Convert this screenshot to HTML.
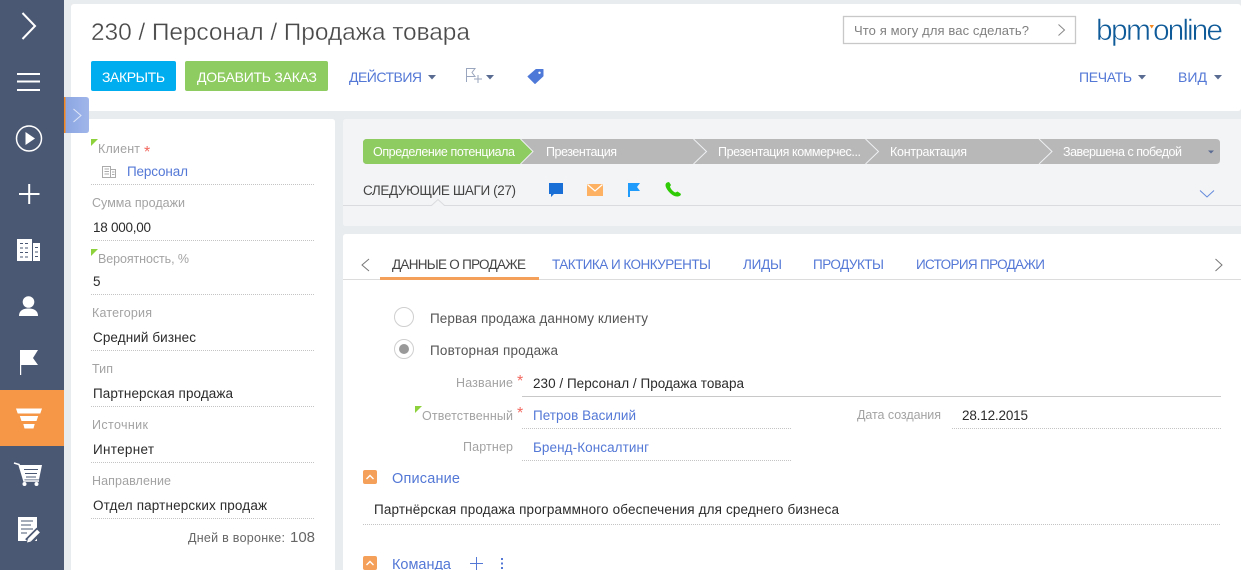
<!DOCTYPE html>
<html lang="ru">
<head>
<meta charset="utf-8">
<title>230 / Персонал / Продажа товара</title>
<style>
html,body{margin:0;padding:0;width:1241px;height:570px;overflow:hidden;background:#e9ecee}
svg{display:block}
text{font-family:"Liberation Sans",sans-serif;white-space:pre}
.l{font-size:12.5px;fill:#a3a3a3}
.v{font-size:13.5px;fill:#2b2b2b}
.b{font-size:13.5px;fill:#5478d6}
.t{font-size:14px;fill:#5478d6}
.s{font-size:12.5px;fill:#fff}
.d{stroke:#c4c4c4;stroke-width:1;stroke-dasharray:1 1;fill:none}
.st{font-size:16px;fill:#f2685f}
</style>
</head>
<body>
<svg width="1241" height="570" viewBox="0 0 1241 570" xmlns="http://www.w3.org/2000/svg">
<defs>
<linearGradient id="tg" x1="0" x2="1" y1="0" y2="0"><stop offset="0" stop-color="#8aa5e2"/><stop offset="1" stop-color="#a0b6ea"/></linearGradient>
</defs>
<rect width="1241" height="570" fill="#e9ecee"/>

<!-- sidebar -->
<rect width="64" height="570" fill="#4b5873"/>
<rect y="390" width="64" height="56" fill="#f59746"/>
<path d="M22.500 13 L35 26 L22.500 39" fill="none" stroke="#fff" stroke-width="2"/>
<path d="M17 74H40M17 81.500H40M17 90H40" stroke="#fff" stroke-width="2"/>
<circle cx="29" cy="138.500" r="12.500" fill="none" stroke="#fff" stroke-width="1.500"/>
<path d="M25.500 132 L35 138.500 L25.500 145Z" fill="#fff"/>
<path d="M19 194H39.500M29.200 184V204" stroke="#fff" stroke-width="2"/>
<path d="M17 239H32V261H17ZM33 243H40V261H33Z" fill="#fff"/>
<path d="M20 243.500h3M25 243.500h3M20 248h3M25 248h3M20 252.500h3M25 252.500h3M20 257h3M25 257h3M35 247.500h3M35 252h3M35 256.500h3" stroke="#4b5873" stroke-width="1"/>
<circle cx="28.500" cy="302" r="5.800" fill="#fff"/>
<path d="M19 316C19 310 24 308.500 28.500 308.500C33 308.500 38 310 38 316Z" fill="#fff"/>
<path d="M20 350H38L33 358L38 365H21.200V375H20Z" fill="#fff"/>
<path d="M16 408.500H42L40.300 413.500H17.700ZM19.800 416H38.200L36.500 421H21.500ZM23.300 424H34.700L33.500 428.500H24.500Z" fill="#fff"/>
<path d="M14 463 L19 464.500 L24 481H39" fill="none" stroke="#fff" stroke-width="1.500"/>
<path d="M19.500 465H42L39 479.500H23.500Z" fill="#fff"/>
<path d="M24 469.500H38M25 473.500H37M26 477H36" stroke="#4b5873" stroke-width="1"/>
<circle cx="24.500" cy="484" r="2" fill="#fff"/><circle cx="36.500" cy="484" r="2" fill="#fff"/>
<path d="M18 517H37V541H18Z" fill="#fff"/>
<path d="M21 521H33M21 525H31M21 529H33M21 533H27" stroke="#4b5873" stroke-width="1"/>
<path d="M28 542 L39.500 530.500" stroke="#4b5873" stroke-width="8"/>
<path d="M29.500 540 L38.500 531" stroke="#fff" stroke-width="4"/>
<path d="M27 542.500 L28 538.500 L31 541.500Z" fill="#fff"/>

<!-- header -->
<rect x="71" y="4" width="1170" height="107" rx="3" fill="#fff"/>
<text x="91" y="40" font-size="24.500" fill="#4a4a4a" stroke="#fff" stroke-width="0.35" textLength="379" lengthAdjust="spacing">230 / Персонал / Продажа товара</text>
<rect x="91" y="61" width="85" height="30" rx="2" fill="#00aeef"/>
<text x="102" y="82" font-size="14" fill="#fff" textLength="63" lengthAdjust="spacing">ЗАКРЫТЬ</text>
<rect x="185" y="61" width="143" height="30" rx="2" fill="#8ecb60"/>
<text x="197" y="82" font-size="14" fill="#fff" textLength="120" lengthAdjust="spacing">ДОБАВИТЬ ЗАКАЗ</text>
<text x="349" y="82" class="t" textLength="73" lengthAdjust="spacing">ДЕЙСТВИЯ</text>
<path d="M428 75H436L432 79.500Z" fill="#5a6b92"/>
<path d="M466.500 82V68.500H475L472 72.500L475 76.500H466.500" fill="none" stroke="#9aa6bd" stroke-width="1"/>
<path d="M474 79H482M478 75V83" stroke="#9aa6bd" stroke-width="1"/>
<path d="M486 75H494L490 79.500Z" fill="#5a6b92"/>
<path d="M528 76.500 L536 69.500 L543 69.500 L543 76 L535 83.500Z" fill="#4f79d8" stroke="#4f79d8" stroke-linejoin="round"/>
<circle cx="539.500" cy="72.800" r="1.200" fill="#fff"/>
<text x="1079" y="82" class="t" textLength="53" lengthAdjust="spacing">ПЕЧАТЬ</text>
<path d="M1138 75H1146L1142 79.500Z" fill="#5a6b92"/>
<text x="1178" y="82" class="t" textLength="29" lengthAdjust="spacing">ВИД</text>
<path d="M1214 75H1222L1218 79.500Z" fill="#5a6b92"/>

<!-- search -->
<rect x="843.500" y="16.500" width="232" height="27" fill="#fff" stroke="#c8c8c8" stroke-width="1.300"/>
<text x="854" y="35" font-size="13" fill="#808080" textLength="175" lengthAdjust="spacing">Что я могу для вас сделать?</text>
<path d="M1058.500 24.500 L1064.500 30 L1058.500 35.500" fill="none" stroke="#888" stroke-width="1"/>

<!-- logo -->
<text x="1096" y="40" font-size="30" fill="#0f5a98" stroke="#fff" stroke-width="0.6" textLength="55" lengthAdjust="spacing">bpm</text>
<text x="1153" y="40" font-size="30" fill="#0f5a98" stroke="#fff" stroke-width="0.6" textLength="70" lengthAdjust="spacing">online</text>
<path d="M1149.500 25H1154L1151.700 28.500Z" fill="#f5881f"/>

<!-- left panel -->
<path d="M71 122Q71 119 74 119H332Q335 119 335 122V570H71Z" fill="#fff"/>
<path d="M91 139H98L91 146Z" fill="#8dd13c"/>
<text x="98" y="153" class="l" textLength="42" lengthAdjust="spacing">Клиент</text>
<text x="144" y="157" class="st">*</text>
<path d="M102.500 166.500H110.500V177.500H102.500ZM110.500 169.500H115.500V177.500H110.500ZM104.500 169H109M104.500 171.500H109M104.500 174H109M112 172H114.500M112 174.500H114.500" fill="none" stroke="#ababab" stroke-width="1"/>
<text x="127" y="176" class="b" textLength="61" lengthAdjust="spacing">Персонал</text>
<path class="d" d="M91 184.500H315"/>
<text x="92" y="207" class="l" textLength="93" lengthAdjust="spacing">Сумма продажи</text>
<text x="93" y="232" class="v" textLength="58" lengthAdjust="spacing">18 000,00</text>
<path class="d" d="M91 240.500H315"/>
<path d="M91 249H98L91 256Z" fill="#8dd13c"/>
<text x="98" y="263" class="l" textLength="91" lengthAdjust="spacing">Вероятность, %</text>
<text x="93" y="286" class="v">5</text>
<path class="d" d="M91 294.500H315"/>
<text x="92" y="317" class="l" textLength="60" lengthAdjust="spacing">Категория</text>
<text x="93" y="342" class="v" textLength="103" lengthAdjust="spacing">Средний бизнес</text>
<path class="d" d="M91 350.500H315"/>
<text x="92" y="373" class="l" textLength="21" lengthAdjust="spacing">Тип</text>
<text x="93" y="398" class="v" textLength="140" lengthAdjust="spacing">Партнерская продажа</text>
<path class="d" d="M91 406.500H315"/>
<text x="92" y="429" class="l" textLength="56" lengthAdjust="spacing">Источник</text>
<text x="93" y="454" class="v" textLength="61" lengthAdjust="spacing">Интернет</text>
<path class="d" d="M91 462.500H315"/>
<text x="92" y="485" class="l" textLength="79" lengthAdjust="spacing">Направление</text>
<text x="93" y="510" class="v" textLength="174" lengthAdjust="spacing">Отдел партнерских продаж</text>
<path class="d" d="M91 518.500H315"/>
<text x="188" y="542" font-size="12.500" fill="#666" textLength="97" lengthAdjust="spacing">Дней в воронке:</text>
<text x="290" y="542" font-size="15" fill="#666" textLength="25" lengthAdjust="spacing">108</text>

<!-- side toggle -->
<path d="M64 97H86Q89 97 89 100V130Q89 133 86 133H64Z" fill="url(#tg)"/>
<rect x="64" y="97" width="1.500" height="36" fill="#f5881f"/>
<path d="M73.500 109 L81 115.500 L73.500 122" fill="none" stroke="#dfe6f7" stroke-width="1"/>

<!-- stage panel -->
<path d="M343 122Q343 119 346 119H1241V226H346Q343 226 343 223Z" fill="#f3f4f6"/>
<path d="M367 139H1216Q1220 139 1220 143V160Q1220 164 1216 164H367Q363 164 363 160V143Q363 139 367 139Z" fill="#b8b8b8"/>
<path d="M367 139H520L533 151.500L520 164H367Q363 164 363 160V143Q363 139 367 139Z" fill="#8ecb60"/>
<path d="M520.500 139L533 151.500L520.500 164M693.500 139L706.500 151.500L693.500 164M865.500 139L878.500 151.500L865.500 164M1039 139L1052 151.500L1039 164" fill="none" stroke="#eef0f2" stroke-width="1"/>
<text x="373" y="156" class="s" textLength="142" lengthAdjust="spacing">Определение потенциала</text>
<text x="546" y="156" class="s" textLength="71" lengthAdjust="spacing">Презентация</text>
<text x="718" y="156" class="s" textLength="143" lengthAdjust="spacing">Презентация коммерчес...</text>
<text x="890" y="156" class="s" textLength="77" lengthAdjust="spacing">Контрактация</text>
<text x="1063" y="156" class="s" textLength="119" lengthAdjust="spacing">Завершена с победой</text>
<path d="M1208 150.500H1214L1211 153.500Z" fill="#5a6b92"/>
<text x="363" y="195" font-size="13.500" fill="#444" textLength="153" lengthAdjust="spacing">СЛЕДУЮЩИЕ ШАГИ (27)</text>
<path d="M343 205.500H431.500L438 199.500L444.500 205.500H1241" fill="none" stroke="#d9dbde" stroke-width="1"/>
<path d="M549 183H563V194H554L551 197V194H549Z" fill="#1a6fd6"/>
<rect x="587" y="184" width="16" height="12" fill="#fdb163"/>
<path d="M587.500 184.500L595 191L602.500 184.500" fill="none" stroke="#fff" stroke-width="1.200"/>
<path d="M628 183H640L637 187L640 191H630V197H628Z" fill="#1e9bfb"/>
<path d="M667 182.500C664.500 184 665.500 187 667.500 190C670 193.500 674 197 678 196.500C680.500 196 681.500 194.500 680.500 193.500L677.500 191.500L675.500 192.500C673.500 192 670.500 189 670 186.500L671 185L669 182Z" fill="#2ecb06"/>
<path d="M1200 190.500L1207 197L1214 190.500" fill="none" stroke="#6189dc" stroke-width="1"/>

<!-- main panel -->
<path d="M343 237Q343 234 346 234H1241V570H343Z" fill="#fff"/>
<path d="M369 259L362 265L369 271" fill="none" stroke="#777" stroke-width="1"/>
<text x="392" y="269" font-size="13.500" fill="#444" textLength="134" lengthAdjust="spacing">ДАННЫЕ О ПРОДАЖЕ</text>
<text x="552" y="269" class="b" textLength="159" lengthAdjust="spacing">ТАКТИКА И КОНКУРЕНТЫ</text>
<text x="743" y="269" class="b" textLength="39" lengthAdjust="spacing">ЛИДЫ</text>
<text x="813" y="269" class="b" textLength="71" lengthAdjust="spacing">ПРОДУКТЫ</text>
<text x="916" y="269" class="b" textLength="129" lengthAdjust="spacing">ИСТОРИЯ ПРОДАЖИ</text>
<path d="M1215.500 259L1222 265L1215.500 271" fill="none" stroke="#777" stroke-width="1"/>
<path d="M343 279.500H1241" stroke="#dcdcdc" stroke-width="1"/>
<rect x="380" y="277" width="159" height="3" fill="#f5a05a"/>

<circle cx="404" cy="317" r="9.500" fill="#fff" stroke="#cfcfcf" stroke-width="1"/>
<text x="430" y="323" font-size="13.500" fill="#555" textLength="218" lengthAdjust="spacing">Первая продажа данному клиенту</text>
<circle cx="404" cy="349" r="9.500" fill="#fff" stroke="#cfcfcf" stroke-width="1"/>
<circle cx="404" cy="349" r="5" fill="#999"/>
<text x="430" y="355" font-size="13.500" fill="#555" textLength="128" lengthAdjust="spacing">Повторная продажа</text>

<text x="456" y="387" class="l" textLength="57" lengthAdjust="spacing">Название</text>
<text x="517" y="386" class="st">*</text>
<text x="533" y="388" class="v" textLength="211" lengthAdjust="spacing">230 / Персонал / Продажа товара</text>
<path d="M522 396.500H1221" stroke="#c8c8c8" stroke-width="1"/>

<path d="M415 406H422L415 413Z" fill="#8dd13c"/>
<text x="422" y="420" class="l" textLength="91" lengthAdjust="spacing">Ответственный</text>
<text x="517" y="418" class="st">*</text>
<text x="533" y="420" class="b" textLength="103" lengthAdjust="spacing">Петров Василий</text>
<path class="d" d="M522 428.500H792"/>
<text x="857" y="419" class="l" textLength="84" lengthAdjust="spacing">Дата создания</text>
<text x="962" y="420" class="v" textLength="66" lengthAdjust="spacing">28.12.2015</text>
<path class="d" d="M952 428.500H1221"/>

<text x="463" y="451" class="l" textLength="50" lengthAdjust="spacing">Партнер</text>
<text x="533" y="452" class="b" textLength="116" lengthAdjust="spacing">Бренд-Консалтинг</text>
<path class="d" d="M522 460.500H792"/>

<rect x="363" y="470" width="14" height="14" rx="2" fill="#f5a05a"/>
<path d="M366.500 479L370 475.500L373.500 479" fill="none" stroke="#fff" stroke-width="1.400"/>
<text x="392" y="483" font-size="14.500" fill="#5478d6" textLength="68" lengthAdjust="spacing">Описание</text>
<text x="374" y="514" class="v" textLength="465" lengthAdjust="spacing">Партнёрская продажа программного обеспечения для среднего бизнеса</text>
<path class="d" d="M363 524.500H1221"/>

<rect x="363" y="556" width="14" height="14" rx="2" fill="#f5a05a"/>
<path d="M366.500 565L370 561.500L373.500 565" fill="none" stroke="#fff" stroke-width="1.400"/>
<text x="392" y="569" font-size="14.500" fill="#5478d6" textLength="59" lengthAdjust="spacing">Команда</text>
<path d="M470 563.500H483M476.500 557V570" stroke="#5478d6" stroke-width="1"/>
<path d="M502 558V560M502 562.500V564.500M502 567V569" stroke="#5478d6" stroke-width="2"/>
</svg>
</body>
</html>
